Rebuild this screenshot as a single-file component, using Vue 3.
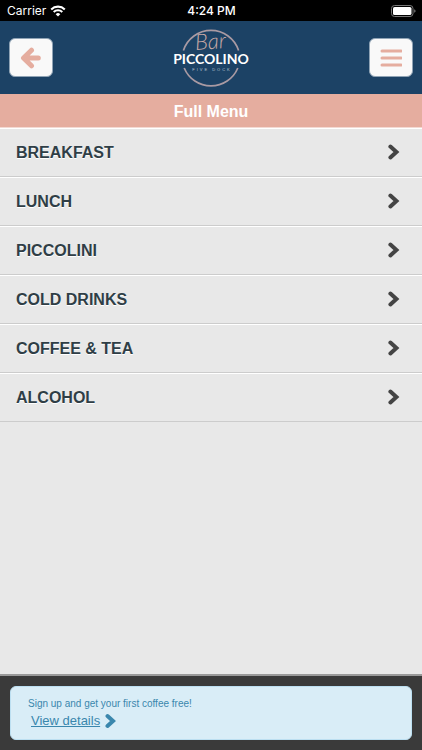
<template>
  <div class="app">
    <div class="status">
      <div class="carrier">
        <span>Carrier</span>
        <svg width="16" height="12" viewBox="0 0 16 12" aria-hidden="true">
          <path d="M1.2 4.4A9.7 9.7 0 0 1 14.8 4.4" fill="none" stroke="#fff" stroke-width="2.1" />
          <path d="M3.7 7A6.1 6.1 0 0 1 12.3 7" fill="none" stroke="#fff" stroke-width="2" />
          <path d="M8 11.6L5.7 9.2A3.3 3.3 0 0 1 10.3 9.2Z" fill="#fff" />
        </svg>
      </div>
      <span class="time">4:24 PM</span>
      <svg class="battery" width="25" height="12" viewBox="0 0 25 12" aria-hidden="true">
        <rect x="0.5" y="0.5" width="21.5" height="11" rx="3" fill="none" stroke="#777" />
        <rect x="2" y="2" width="18.5" height="8" rx="1.6" fill="#fff" />
        <path d="M23.2 4.2Q24.6 4.7 24.6 6T23.2 7.8Z" fill="#777" />
      </svg>
    </div>

    <header class="header">
      <button class="nav-btn" type="button" aria-label="Back">
        <svg width="22" height="22" viewBox="0 0 22 22">
          <path d="M11.5 3.2L3.5 11L11.5 18.8M4.5 11H18.3" />
        </svg>
      </button>
      <svg class="logo" width="84" height="64" viewBox="0 0 84 64" role="img" aria-label="Bar Piccolino Five Dock">
        <g fill="none" stroke="#a99aa3" stroke-width="1.7">
          <path d="M14.4 24.5A29 29 0 0 1 69.6 24.5" />
          <path d="M15.2 42A29 29 0 0 0 68.8 42" />
        </g>
        <text class="logo-script" x="42" y="23" transform="rotate(-4 42 23)">Bar</text>
        <text class="logo-name" x="42" y="38">PICCOLINO</text>
        <text class="logo-place" x="43" y="45">FIVE DOCK</text>
      </svg>
      <button class="nav-btn" type="button" aria-label="Menu">
        <svg width="22" height="22" viewBox="0 0 22 22">
          <path class="bars" d="M2 4H21M2 11H21M2 18H21" />
        </svg>
      </button>
    </header>

    <h1 class="title">Full Menu</h1>

    <main class="content">
      <ul class="menu">
        <li v-for="item in items" :key="item">
          <a href="#" @click.prevent="selected = item">
            <span>{{ item }}</span>
            <svg class="chevron" width="12" height="16" viewBox="0 0 12 16" aria-hidden="true">
              <path d="M2.4 2.6L8.4 8L2.4 13.4" />
            </svg>
          </a>
        </li>
      </ul>
    </main>

    <footer class="footer">
      <div class="promo">
        <p>Sign up and get your first coffee free!</p>
        <a href="#" @click.prevent>
          <span>View details</span>
          <svg class="chevron" width="12" height="16" viewBox="0 0 12 16" aria-hidden="true">
            <path d="M2.5 3L8 8L2.5 13" />
          </svg>
        </a>
      </div>
    </footer>
  </div>
</template>

<script setup>
import { ref } from 'vue'

const items = ['BREAKFAST', 'LUNCH', 'PICCOLINI', 'COLD DRINKS', 'COFFEE & TEA', 'ALCOHOL']
const selected = ref(null)
</script>

<style>
body {
  margin: 0;
  background: #e8e8e8;
}
</style>

<style scoped>
.app {
  display: flex;
  flex-direction: column;
  min-height: 100vh;
  font-family: "Liberation Sans", Arial, sans-serif;
  background: #e8e8e8;
}
.status {
  display: grid;
  grid-template-columns: 1fr auto 1fr;
  align-items: center;
  height: 21px;
  padding: 0 6px 0 7px;
  box-sizing: border-box;
  background: #000;
  color: #fff;
  font-family: Inter, sans-serif;
  font-size: 12px;
}
.carrier {
  display: flex;
  align-items: center;
  gap: 4px;
}
.time {
  font-weight: 500;
}
.battery {
  justify-self: end;
}
.header {
  display: flex;
  align-items: center;
  justify-content: space-between;
  height: 73px;
  padding: 0 9px;
  background: #1c4265;
}
.nav-btn {
  display: flex;
  align-items: center;
  justify-content: center;
  width: 44px;
  height: 39px;
  padding: 0;
  border: 1px solid #8fa3b5;
  border-radius: 6px;
  background: #f9f9f9;
  cursor: pointer;
}
.nav-btn path {
  fill: none;
  stroke: #e5ad9f;
  stroke-width: 5;
  stroke-linecap: round;
  stroke-linejoin: round;
}
.nav-btn .bars {
  stroke-width: 3;
}
.logo text {
  text-anchor: middle;
  fill: #fff;
}
.logo .logo-script {
  font-family: Lato, sans-serif;
  font-size: 22px;
  font-style: italic;
  font-weight: 300;
  fill: #c9a9a6;
}
.logo .logo-name {
  font-family: Lato, sans-serif;
  font-size: 14px;
  font-weight: 700;
}
.logo .logo-place {
  font-size: 4px;
  letter-spacing: 2px;
  fill: #b9c4d2;
}
.title {
  margin: 0;
  padding: 7px 0 5px;
  border-bottom: 1px solid #f3d9d3;
  background: #e5ad9f;
  color: #fff;
  font-size: 16px;
  line-height: 21px;
  text-align: center;
}
.content {
  flex: 1;
}
.menu {
  margin: 0;
  padding: 0;
  list-style: none;
}
.menu a {
  display: flex;
  align-items: center;
  justify-content: space-between;
  height: 49px;
  padding: 0 22px 0 16px;
  box-sizing: border-box;
  border-top: 1px solid #fff;
  border-bottom: 1px solid #ccc;
  color: #2f3e46;
  font-size: 16px;
  font-weight: bold;
  text-decoration: none;
  text-shadow: 0 1px 0 #fff;
}
.menu .chevron {
  margin-bottom: 2px;
}
.chevron path {
  fill: none;
  stroke: #444;
  stroke-width: 4;
  stroke-linecap: round;
}
.footer {
  padding: 10px;
  border-top: 2px solid #999;
  background: #3a3a3a;
}
.promo {
  padding: 9px 17px;
  border: 1px solid #bcdff1;
  border-radius: 6px;
  background: #d9edf7;
  color: #3a87ad;
}
.promo p {
  margin: 0;
  font-size: 10px;
  line-height: 15px;
}
.promo a {
  display: inline-flex;
  align-items: center;
  gap: 5px;
  padding-left: 3px;
  color: #3a87ad;
  font-size: 13px;
  line-height: 18px;
}
.promo .chevron path {
  stroke: #3a87ad;
}
</style>
